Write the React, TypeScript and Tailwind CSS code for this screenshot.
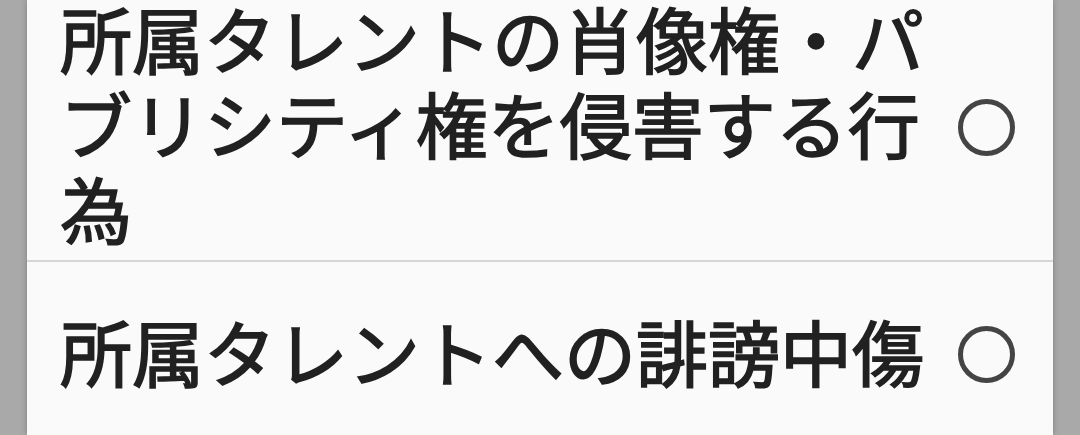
import React from 'react';

const items = [
  { id: 1, label: '所属タレントの肖像権・パブリシティ権を侵害する行為' },
  { id: 2, label: '所属タレントへの誹謗中傷' },
];

function Radio() {
  return <div className="w-[57px] h-[57px] shrink-0 rounded-full border-[5px] border-[#444444]" />;
}

export default function App() {
  return (
    <div
      className="w-full h-[435px] overflow-hidden bg-[#a9a9a9] px-[27px]"
      style={{ fontFamily: '"Noto Sans CJK JP", "Noto Sans", sans-serif' }}
    >
      <div className="h-full bg-[#fafafa] shadow-[0_0_6px_rgba(0,0,0,0.25)]">
        {/* first item is scrolled so its top edge is cut */}
        <div className="flex items-center pl-[33px] pr-[38px] pb-[5px]">
          <p className="w-[880px] -mt-[6px] mb-[6px] text-[72px] leading-[85px] font-normal text-[#212121] [-webkit-text-stroke:1.6px_#212121]">
            {items[0].label}
          </p>
          <div className="ml-[18px]">
            <Radio />
          </div>
        </div>
        <div className="h-[2px] bg-[#d6d6d6]" />
        <div className="flex items-center min-h-[184px] pl-[33px] pr-[38px]">
          <p className="w-[880px] -mt-[10px] text-[72px] leading-[85px] font-normal text-[#212121] [-webkit-text-stroke:1.6px_#212121]">
            {items[1].label}
          </p>
          <div className="ml-[18px]">
            <Radio />
          </div>
        </div>
      </div>
    </div>
  );
}
